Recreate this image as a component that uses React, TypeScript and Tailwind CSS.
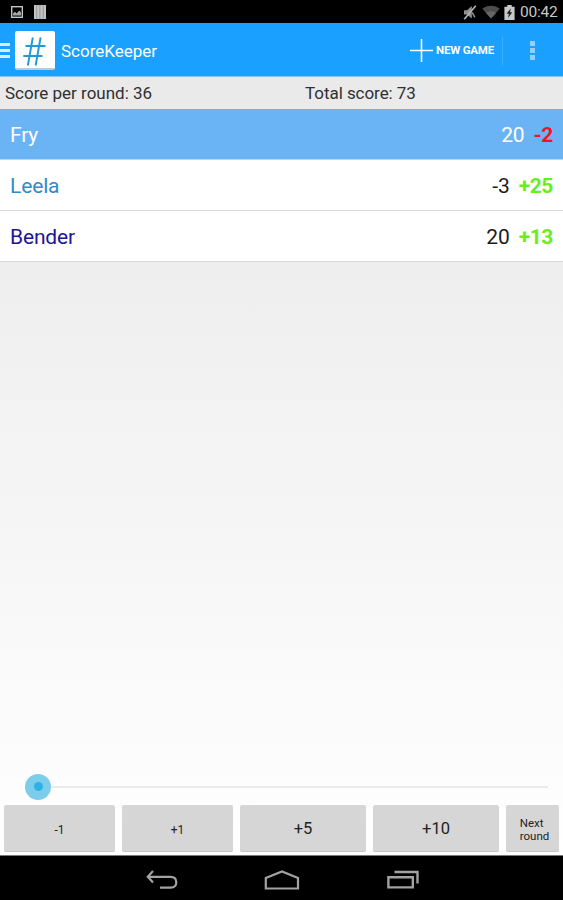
import clsx from 'clsx';

interface Player {
  name: string;
  score: number;
  delta: string;
  nameColor: string;
  deltaColor: string;
  selected?: boolean;
}

const players: Player[] = [
  { name: 'Fry', score: 20, delta: '-2', nameColor: 'text-white', deltaColor: 'text-[#f01428]', selected: true },
  { name: 'Leela', score: -3, delta: '+25', nameColor: 'text-[#2f8cc8]', deltaColor: 'text-[#66f01a]' },
  { name: 'Bender', score: 20, delta: '+13', nameColor: 'text-[#1c1496]', deltaColor: 'text-[#66f01a]' },
];

const StatusBar = () => (
  <div className="flex h-[23px] shrink-0 items-center bg-black pl-[11px] pr-[4px] pt-px">
    <svg width="12" height="12" viewBox="0 0 12 12" fill="none">
      <rect x="0.7" y="0.7" width="10.6" height="10.6" stroke="#c4c4c4" strokeWidth="1.4" />
      <path d="M2 9.5V7.5L4 5.8 5.7 7.6 8.3 4.5 10 6.5v3z" fill="#a8a8a8" />
    </svg>
    <svg className="ml-[11px]" width="12" height="14" viewBox="0 0 12 14">
      <path d="M0 0h12v14H0z" fill="#a0a0a0" />
      <path d="M0 0h2v14H0zM3.2 0h2v14h-2zM6.6 0h2v14h-2zM10 0h2v14h-2z" fill="#c4c4c4" />
    </svg>

    <div className="ml-auto flex items-center">
      <svg width="14" height="15" viewBox="0 0 14 15">
        <path d="M1 5.2h3L8.8 1v12.5L4 9.6H1z" fill="#8f8f8f" />
        <path d="M12.8 0.8 1.2 14.2" stroke="#b8b8b8" strokeWidth="1.6" />
        <path d="M9.2 7.4l2.6 5" stroke="#8f8f8f" strokeWidth="1.5" />
      </svg>
      <svg className="ml-[5px]" width="18" height="14" viewBox="0 0 18 14">
        <path d="M0.3 3.8C5-0.4 13-0.4 17.7 3.8L9 13.6z" fill="#4d4d4d" />
        <path d="M4 8C6.6 5.7 11.4 5.7 14 8L9 13.6z" fill="#666" />
      </svg>
      <svg className="ml-[4px]" width="11" height="15" viewBox="0 0 11 15">
        <path d="M3.3 0h4.4v1.8H10.6V15H0.4V1.8h2.9z" fill="#c9c9c9" />
        <path d="M6.8 3.2 2.6 8.8h2.3l-.9 4.2 4.3-5.8H6z" fill="#222" />
      </svg>
      <span className="ml-[5px] w-[39px] pt-[2px] text-[15.5px] leading-none tracking-[-0.2px] text-[#c8c8c8]">00:42</span>
    </div>
  </div>
);

const ActionBar = () => (
  <div className="flex h-[54px] shrink-0 items-center border-b border-[#8fc4ea] bg-[#1aa0ff] pt-[2px] text-white">
    <div className="flex w-[10px] flex-col gap-[3px]">
      <span className="h-[3px] bg-[#d5edff]" />
      <span className="h-[3px] bg-[#d5edff]" />
      <span className="h-[3px] bg-[#d5edff]" />
    </div>
    <div className="ml-[5px] flex h-[39px] w-[40px] items-center justify-center rounded-[2px] border-b-2 border-[#b9cbd8] bg-white pr-[2px] pt-[4px]">
      <svg width="23" height="29" viewBox="0 0 23 29" fill="none" stroke="#1e9ad6" strokeWidth="1.9">
        <path d="M9.8 0.5 4.8 28.5M17.6 0.5l-5 28" />
        <path d="M2.5 9H22.5M0.3 19H19.5" />
      </svg>
    </div>
    <h1 className="ml-[6px] pt-px text-[17px] leading-none">ScoreKeeper</h1>

    <button className="ml-auto flex items-center">
      <svg width="23" height="23" viewBox="0 0 23 23" stroke="#fff" strokeWidth="1.6">
        <path d="M11.5 0v23M0 11.5h23" />
      </svg>
      <span className="ml-[3px] w-[59px] whitespace-nowrap text-left text-[11.5px] font-bold leading-none tracking-[-0.2px]">
        NEW GAME
      </span>
    </button>
    <span className="ml-[7px] h-[28px] w-px bg-[#3aaefc]" />
    <button className="ml-[27px] mr-[28px] flex flex-col gap-[2px]">
      <span className="size-[5px] bg-[#90d0ff]" />
      <span className="size-[5px] bg-[#90d0ff]" />
      <span className="size-[5px] bg-[#90d0ff]" />
    </button>
  </div>
);

const PlayerRow = ({ player }: { player: Player }) => (
  <li
    className={clsx(
      'flex h-[51px] items-center border-b px-[10px] pt-[2px] text-[21px] leading-none tracking-[-0.15px]',
      player.selected ? 'border-[#b4d8f6] bg-[#6ab4f5]' : 'border-[#d8d8d8] bg-white',
    )}
  >
    <span className={player.nameColor}>{player.name}</span>
    <span className={clsx('ml-auto', player.selected ? 'text-white' : 'text-[#1c1c1c]')}>{player.score}</span>
    <span className={clsx('ml-[9px] font-bold tracking-[-0.4px]', player.deltaColor)}>{player.delta}</span>
  </li>
);

const ScoreSlider = () => (
  <div className="flex h-[27px] items-center pl-[25px] pr-[15px]">
    <div className="flex size-[26px] items-center justify-center rounded-full bg-[#7bcdeb]">
      <span className="size-[9px] rounded-full bg-[#2fb2e2]" />
    </div>
    <div className="h-[2px] flex-1 bg-[#ebebeb]" />
  </div>
);

const buttonClass =
  'flex h-[47px] items-center justify-center rounded-[2px] border-b border-[#c6c6c6] bg-[#d6d6d6] pt-[3px] text-[#222]';

const ScoreButtons = () => (
  <div className="mt-[5px] flex gap-[7px] px-[4px] pb-[3px]">
    <button className={clsx(buttonClass, 'w-[111px] text-[12px]')}>-1</button>
    <button className={clsx(buttonClass, 'w-[111px] text-[12px]')}>+1</button>
    <button className={clsx(buttonClass, 'w-[126px] text-[16.5px]')}>+5</button>
    <button className={clsx(buttonClass, 'w-[126px] text-[16.5px]')}>+10</button>
    <button className={clsx(buttonClass, 'flex-1 pl-[4px] text-left text-[11.5px] leading-[13px]')}>
      Next
      <br />
      round
    </button>
  </div>
);

const NavigationBar = () => (
  <div className="flex h-[45px] shrink-0 items-center border-t border-[#777] bg-black pl-[146px] pt-[3px]">
    <svg width="32" height="19" viewBox="0 0 32 19" fill="none" stroke="#a2a2a2" strokeWidth="2.2">
      <path d="M7 1 1.8 6.8 7 12.6M2 6.8h22.5q5.8 0 5.8 5.4t-5.8 5.4H14" />
    </svg>
    <svg className="ml-[86px]" width="36" height="20" viewBox="0 0 36 20" fill="none" stroke="#a2a2a2" strokeWidth="2.2">
      <path d="M1.8 18.5V8L18 1.5 34 8v10.5z" />
    </svg>
    <svg className="ml-[87px]" width="32" height="19" viewBox="0 0 32 19" fill="none" stroke="#a2a2a2" strokeWidth="2.4">
      <path d="M1.4 7.2h24.4v10.2H1.4z" />
      <path d="M7.5 2h23v11.5" />
    </svg>
  </div>
);

export default function App() {
  return (
    <div className="flex h-[900px] w-[563px] flex-col overflow-hidden font-[Roboto,sans-serif]">
      <StatusBar />
      <ActionBar />
      <div className="flex h-[32px] shrink-0 items-center bg-[#eaeaea] pl-[5px] pt-px text-[17px] leading-none text-[#303030]">
        <span className="w-[300px]">Score per round: 36</span>
        <span className="tracking-[-0.05px]">Total score: 73</span>
      </div>
      <div className="flex flex-1 flex-col bg-linear-to-b from-[#eaeaea] to-white">
        <ul>
          {players.map((player) => (
            <PlayerRow key={player.name} player={player} />
          ))}
        </ul>
        <div className="mt-auto">
          <ScoreSlider />
          <ScoreButtons />
        </div>
      </div>
      <NavigationBar />
    </div>
  );
}
